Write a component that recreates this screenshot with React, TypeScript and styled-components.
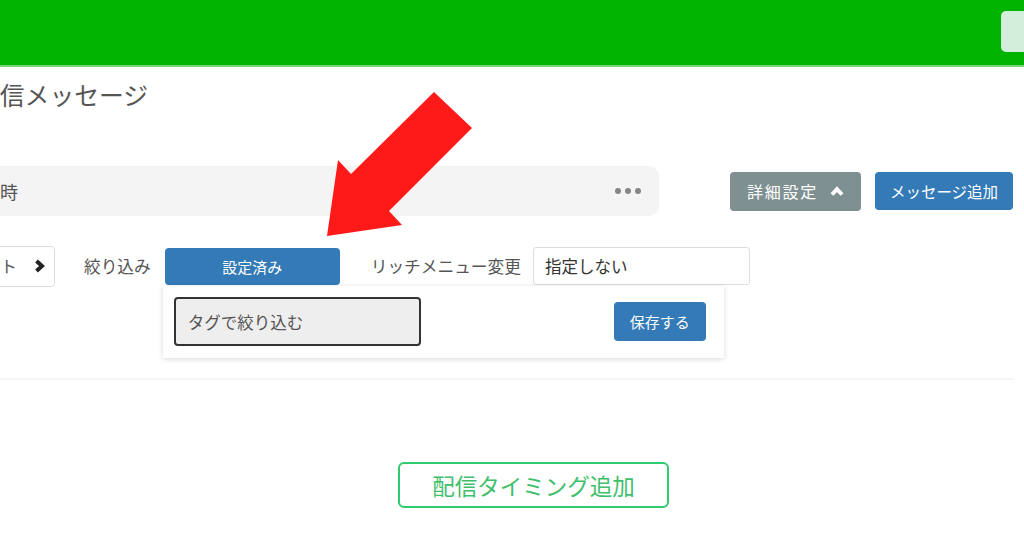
import React from "react";
import styled, { createGlobalStyle } from "styled-components";

const Global = createGlobalStyle`
  html, body { margin: 0; padding: 0; background: #fff; overflow: hidden; }
  body { font-family: "Noto Sans CJK JP", "Noto Sans", sans-serif; color: #555; }
  * { box-sizing: border-box; }
`;

const Page = styled.div`
  position: relative;
  width: 1024px;
  height: 538px;
  overflow: hidden;
`;

const Header = styled.header`
  height: 67px;
  background: #00b300;
  border-bottom: 2px solid #74d774;
  display: flex;
  justify-content: flex-end;
  align-items: flex-start;
  padding-top: 11px;
`;

const HeaderButton = styled.div`
  width: 40px;
  height: 41px;
  margin-right: -17px;
  background: #d3efdc;
  border-radius: 5px;
`;

const Main = styled.main`
  margin-left: -64px;
  width: 1088px;
  padding-right: 11px;
`;

const Title = styled.h1`
  margin: 9px 0 0 39px;
  font-size: 24.8px;
  line-height: 36px;
  font-weight: 400;
  color: #555;
  white-space: nowrap;
`;

const Toolbar = styled.div`
  margin-top: 54px;
  display: flex;
  align-items: center;
  padding-left: 30px;
`;

const TimingBox = styled.div`
  flex: 1;
  height: 50px;
  margin-right: 71px;
  background: #f4f4f4;
  border-radius: 10px;
  display: flex;
  align-items: center;
  justify-content: space-between;
  padding: 0 18px 0 16px;
  font-size: 18px;
  color: #555;
`;

const Dots = styled.div`
  display: flex;
  gap: 4px;
  span {
    width: 6px;
    height: 6px;
    border-radius: 50%;
    background: #858585;
  }
`;

const Button = styled.button<{ $bg: string; $w: number; $h: number; $ls?: number; $fs?: number }>`
  width: ${(p) => p.$w}px;
  height: ${(p) => p.$h}px;
  background: ${(p) => p.$bg};
  color: #fff;
  border: none;
  border-radius: 4px;
  font-family: inherit;
  font-size: ${(p) => p.$fs ?? 16}px;
  letter-spacing: ${(p) => p.$ls ?? 0}px;
  display: flex;
  align-items: center;
  justify-content: center;
  gap: 12px;
  padding: 0;
  white-space: nowrap;
  flex-shrink: 0;
`;

const Gap = styled.div<{ $w: number }>`
  width: ${(p) => p.$w}px;
  flex-shrink: 0;
`;

const FilterRow = styled.div`
  margin-top: 30px;
  display: flex;
  align-items: center;
  padding-left: 3px;
  height: 40px;
`;

const OutlineButton = styled.div`
  width: 116px;
  height: 41px;
  border: 1px solid #ddd;
  border-radius: 4px;
  background: #fff;
  display: flex;
  align-items: center;
  justify-content: flex-end;
  gap: 17px;
  padding-right: 9px;
  font-size: 16.5px;
  color: #555;
  flex-shrink: 0;
`;

const Label = styled.span<{ $ml: number }>`
  margin-left: ${(p) => p.$ml}px;
  font-size: 16.7px;
  color: #555;
  white-space: nowrap;
`;

const DropWrap = styled.div`
  position: relative;
  margin-left: 14px;
  flex-shrink: 0;
`;

const Popup = styled.div`
  position: absolute;
  top: 100%;
  left: -2px;
  margin-top: 1px;
  width: 561px;
  height: 72px;
  background: #fff;
  box-shadow: 0 1px 5px rgba(0, 0, 0, 0.16);
  display: flex;
  align-items: center;
  justify-content: space-between;
  padding: 0 18px 0 11px;
  z-index: 2;
`;

const TagInput = styled.div`
  width: 247px;
  height: 49px;
  background: #eee;
  border: 2px solid #333;
  border-radius: 4px;
  padding: 0 12px;
  display: flex;
  align-items: center;
  font-size: 16.5px;
  color: #555;
`;

const Select = styled.div`
  margin-left: 12px;
  width: 217px;
  height: 38px;
  border: 1px solid #ddd;
  border-radius: 3px;
  background: #fff;
  display: flex;
  align-items: center;
  padding-left: 11px;
  font-size: 16.5px;
  color: #333;
  flex-shrink: 0;
`;

const Separator = styled.hr`
  margin: 92px 0 0 0;
  border: none;
  border-top: 2px solid #f5f5f5;
`;

const AddTiming = styled.button`
  margin: 82px 0 0 462px;
  width: 271px;
  height: 46px;
  border: 2px solid #2fcb6f;
  border-radius: 6px;
  background: #fff;
  color: #3fbf6c;
  font-family: inherit;
  font-size: 22.5px;
  display: flex;
  align-items: center;
  justify-content: center;
  padding: 0;
`;

const Arrow = styled.svg`
  position: absolute;
  left: 0;
  top: 0;
  pointer-events: none;
  z-index: 5;
`;

const ChevronRight = () => (
  <svg width="11" height="14" viewBox="0 0 11 14">
    <path d="M2.5 2 L8 7 L2.5 12" fill="none" stroke="#222" strokeWidth="4" strokeLinejoin="miter" />
  </svg>
);

const ChevronUp = () => (
  <svg width="14" height="11" viewBox="0 0 14 11">
    <path d="M2 8.5 L7 3.2 L12 8.5" fill="none" stroke="#fff" strokeWidth="4" strokeLinejoin="miter" />
  </svg>
);

export default function App() {
  return (
    <Page>
      <Global />
      <Header>
        <HeaderButton />
      </Header>
      <Main>
        <Title>配信メッセージ</Title>
        <Toolbar>
          <TimingBox>
            <span>即時</span>
            <Dots>
              <span />
              <span />
              <span />
            </Dots>
          </TimingBox>
          <Button $bg="#7f9092" $w={131} $h={39} $ls={1.75}>
            <span>詳細設定</span>
            <ChevronUp />
          </Button>
          <Gap $w={14} />
          <Button $bg="#337ab7" $w={138} $h={38} $fs={15.5}>
            メッセージ追加
          </Button>
        </Toolbar>
        <FilterRow>
          <OutlineButton>
            <span>イベント</span>
            <ChevronRight />
          </OutlineButton>
          <Label $ml={29}>絞り込み</Label>
          <DropWrap>
            <Button $bg="#337ab7" $w={175} $h={37} $fs={15}>
              設定済み
            </Button>
            <Popup>
              <TagInput>タグで絞り込む</TagInput>
              <Button $bg="#337ab7" $w={92} $h={39} $fs={15}>
                保存する
              </Button>
            </Popup>
          </DropWrap>
          <Label $ml={31}>リッチメニュー変更</Label>
          <Select>指定しない</Select>
        </FilterRow>
        <Separator />
        <AddTiming>配信タイミング追加</AddTiming>
      </Main>
      <Arrow width="1024" height="538" viewBox="0 0 1024 538">
        <polygon
          points="434,92 472,128 389,211 402,225 327,236 338,160 351,174"
          fill="#ff1a1a"
        />
      </Arrow>
    </Page>
  );
}
